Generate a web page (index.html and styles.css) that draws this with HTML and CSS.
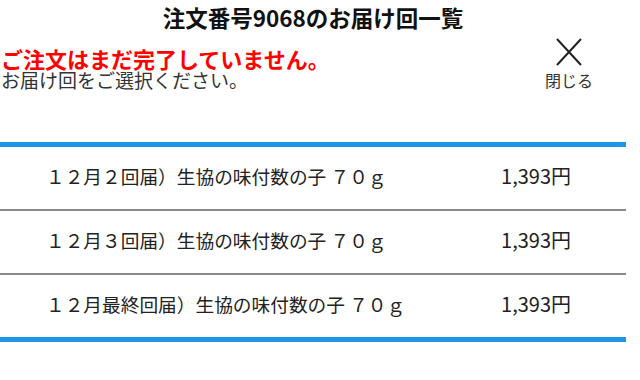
FILE: index.html
```html
<!DOCTYPE html>
<html lang="ja">
<head>
    <meta charset="UTF-8">
    <meta name="viewport" content="width=device-width, initial-scale=1.0">
    <title>お届け回一覧</title>
    <link rel="stylesheet" href="styles.css">
</head>
<body>
<div class="page">
    <h1 class="page__title">注文番号9068のお届け回一覧</h1>

    <div class="notice">
        <div class="notice__text">
            <p class="notice__alert">ご注文はまだ完了していません。</p>
            <p class="notice__hint">お届け回をご選択ください。</p>
        </div>
        <button type="button" class="close">
            <svg class="close__icon" width="28" height="28" viewBox="0 0 28 28">
                <path d="M2 1 L26 27 M26 1 L2 27" stroke="#222" stroke-width="2" fill="none"/>
            </svg>
            <span class="close__label">閉じる</span>
        </button>
    </div>

    <ul class="delivery">
        <li class="delivery__row">
            <span class="delivery__name">１２月２回届）生協の味付数の子 ７０ｇ</span>
            <span class="delivery__price">1,393円</span>
        </li>
        <li class="delivery__row">
            <span class="delivery__name">１２月３回届）生協の味付数の子 ７０ｇ</span>
            <span class="delivery__price">1,393円</span>
        </li>
        <li class="delivery__row">
            <span class="delivery__name">１２月最終回届）生協の味付数の子 ７０ｇ</span>
            <span class="delivery__price">1,393円</span>
        </li>
    </ul>
</div>
</body>
</html>
```

FILE: styles.css
```css
body {
    margin: 0;
    background-color: #fff;
    font-family: "Noto Sans CJK JP", "Noto Sans", sans-serif;
    color: #222;
}
.page {
    width: 626px;
}
.page__title {
    margin: 0;
    padding-top: 2px;
    font-size: 22.5px;
    line-height: 30px;
    font-weight: bold;
    text-align: center;
    color: #111;
}
.notice {
    display: flex;
    justify-content: space-between;
    align-items: flex-start;
    padding-left: 1px;
}
.notice__text p { margin: 0; }
.notice__alert {
    padding-top: 14px;
    font-size: 22px;
    line-height: 24px;
    font-weight: bold;
    color: #ff0000;
}
.notice__hint {
    font-size: 19px;
    line-height: 20px;
    color: #333;
}
.close {
    display: flex;
    flex-direction: column;
    align-items: center;
    width: 52px;
    margin-right: 31px;
    margin-top: 6px;
    padding: 0;
    border: none;
    background: none;
    font-family: inherit;
    cursor: pointer;
}
.close__label {
    margin-top: 4px;
    font-size: 16px;
    line-height: 20px;
    color: #333;
}
.delivery {
    list-style: none;
    margin: 52px 0 0;
    padding: 0;
    border-top: 5px solid #1e96e8;
    border-bottom: 5px solid #1e96e8;
}
.delivery__row {
    display: flex;
    align-items: center;
    height: 62px;
    padding: 0 55px 0 46px;
    border-bottom: 2px solid #8a8a8a;
    font-size: 18.7px;
}
.delivery__row:last-child {
    border-bottom: none;
}
.delivery__name {
    flex: 1;
    margin-top: -6px;
}
.delivery__price {
    margin-top: -6px;
    font-size: 20px;
}
```
